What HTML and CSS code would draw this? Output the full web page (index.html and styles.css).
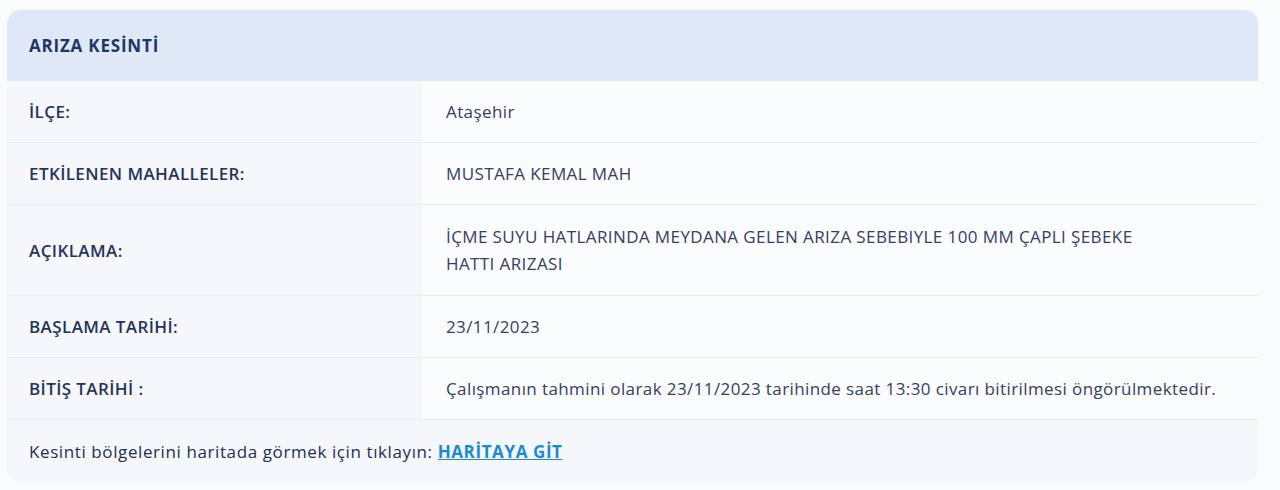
FILE: index.html
```html
<!DOCTYPE html>
<html lang="tr">
<head>
  <meta charset="UTF-8">
  <title>Arıza Kesinti</title>
  <meta name="viewport" content="width=device-width, initial-scale=1">
  <link rel="stylesheet" href="styles.css">
</head>
<body>
  <div class="card">
    <div class="card-head">ARIZA KESİNTİ</div>

    <div class="row">
      <div class="label">İLÇE:</div>
      <div class="value">Ataşehir</div>
    </div>
    <div class="row">
      <div class="label">ETKİLENEN MAHALLELER:</div>
      <div class="value">MUSTAFA KEMAL MAH</div>
    </div>
    <div class="row">
      <div class="label">AÇIKLAMA:</div>
      <div class="value"><p class="long">İÇME SUYU HATLARINDA MEYDANA GELEN ARIZA SEBEBIYLE 100 MM ÇAPLI ŞEBEKE HATTI ARIZASI</p></div>
    </div>
    <div class="row">
      <div class="label">BAŞLAMA TARİHİ:</div>
      <div class="value">23/11/2023</div>
    </div>
    <div class="row">
      <div class="label">BİTİŞ TARİHİ :</div>
      <div class="value">Çalışmanın tahmini olarak 23/11/2023 tarihinde saat 13:30 civarı bitirilmesi öngörülmektedir.</div>
    </div>

    <div class="card-foot">
      Kesinti bölgelerini haritada görmek için tıklayın: <a href="#">HARİTAYA GİT</a>
    </div>
  </div>
</body>
</html>
```

FILE: styles.css
```css
body { margin: 0; padding: 10px 22px 8px 7px; background: #fafbfd; font-family: "Open Sans", "Noto Sans", sans-serif; font-size: 17px; letter-spacing: 0.4px; color: #2c3b5c; }
.card { background: #f5f7fb; border-radius: 14px; overflow: hidden; }
.card-head { background: #dfe8f7; height: 71px; box-sizing: border-box; padding: 0 22px; display: flex; align-items: center; font-weight: 700; letter-spacing: 0.8px; color: #1e3665; }
.row { display: grid; grid-template-columns: 415px 1fr; border-bottom: 1px solid #e8ebf0; }
.label { padding: 17px 22px; line-height: 27px; display: flex; align-items: center; font-weight: 600; color: #253457; }
.value { padding: 17px 34px 17px 24px; line-height: 27px; background: #fbfcfe; color: #34405e; }
.value .long { margin: 1px 0; max-width: 740px; }
.card-foot { height: 62px; box-sizing: border-box; padding: 0 22px; display: flex; align-items: center; gap: 5px; letter-spacing: 0.6px; color: #1e2f55; }
.card-foot a { color: #1b8ad3; font-weight: 700; text-decoration: underline; }
```
